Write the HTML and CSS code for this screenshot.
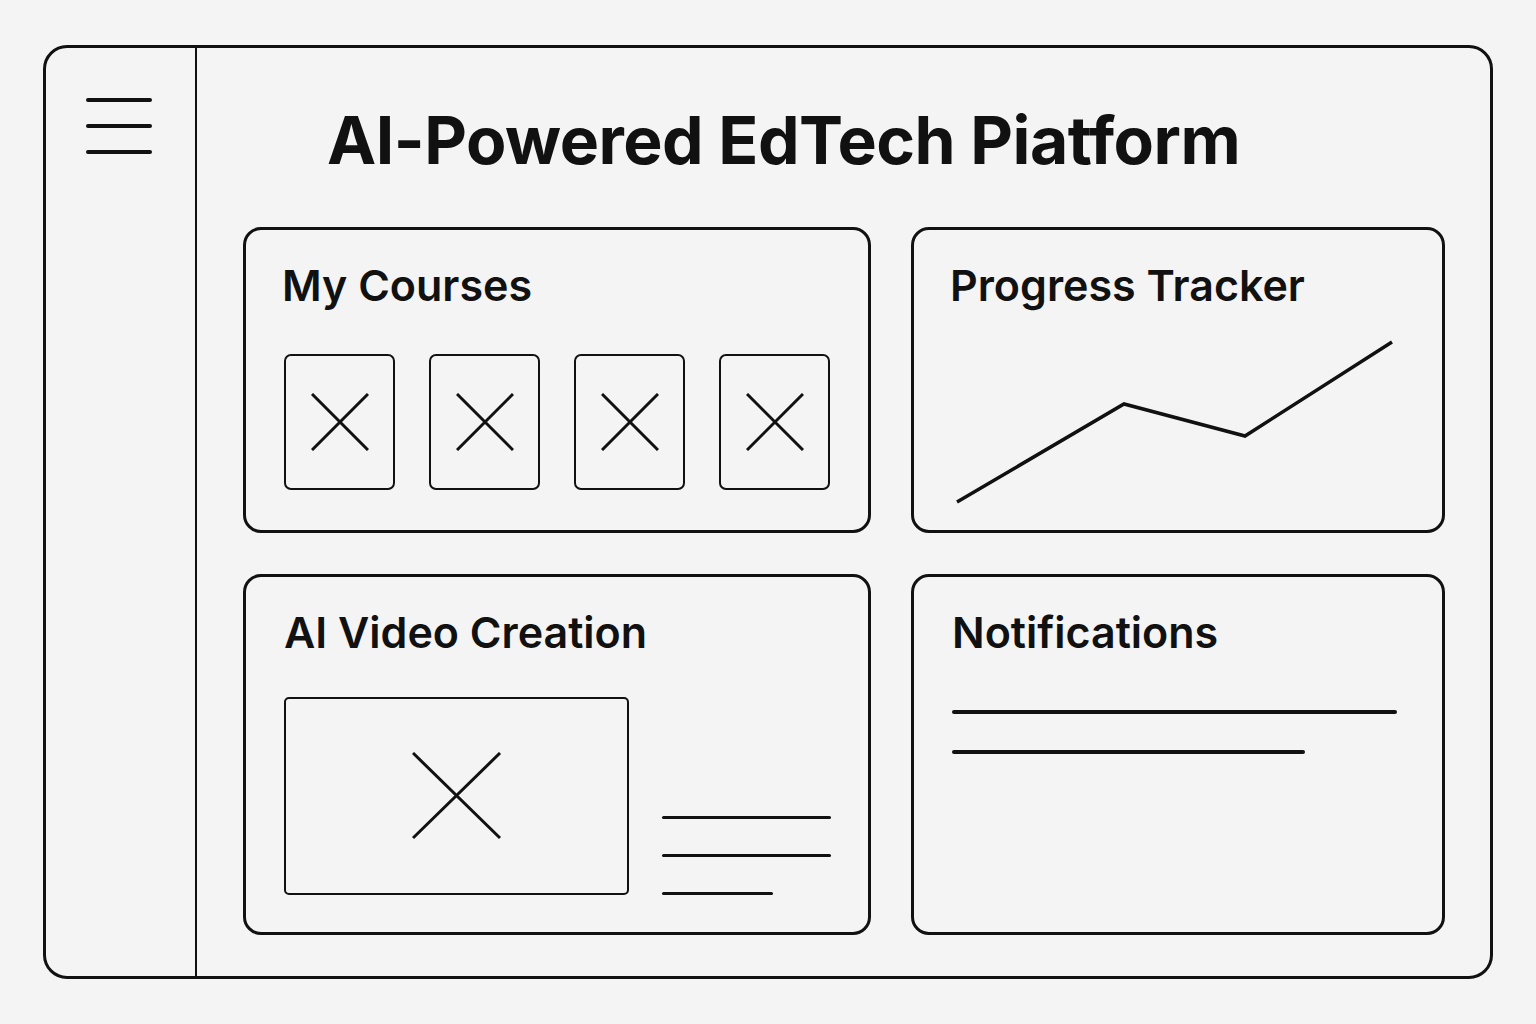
FILE: index.html
```html
<!DOCTYPE html>
<html lang="en">
<head>
    <meta charset="UTF-8">
    <meta name="viewport" content="width=device-width, initial-scale=1.0">
    <title>AI-Powered EdTech Piatform</title>
    <link rel="stylesheet" href="styles.css">
</head>
<body>
    <div class="frame">
        <aside class="sidebar">
            <div class="menu">
                <span></span>
                <span></span>
                <span></span>
            </div>
        </aside>
        <main class="content">
            <h1 class="title">AI-Powered EdTech Piatform</h1>

            <div class="cards">
                <section class="card courses">
                    <h2>My Courses</h2>
                    <div class="thumbs">
                        <div class="thumb"><svg viewBox="0 0 58 58"><path d="M1 1L57 57M57 1L1 57"/></svg></div>
                        <div class="thumb"><svg viewBox="0 0 58 58"><path d="M1 1L57 57M57 1L1 57"/></svg></div>
                        <div class="thumb"><svg viewBox="0 0 58 58"><path d="M1 1L57 57M57 1L1 57"/></svg></div>
                        <div class="thumb"><svg viewBox="0 0 58 58"><path d="M1 1L57 57M57 1L1 57"/></svg></div>
                    </div>
                </section>

                <section class="card progress">
                    <h2>Progress Tracker</h2>
                    <svg class="chart" viewBox="0 0 450 170">
                        <polyline points="7,165 174,67 295,99 442,5"/>
                    </svg>
                </section>

                <section class="card video">
                    <h2>AI Video Creation</h2>
                    <div class="video-row">
                        <div class="player"><svg viewBox="0 0 90 88"><path d="M1 1L88 86M88 1L1 86"/></svg></div>
                        <div class="lines">
                            <span class="line"></span>
                            <span class="line"></span>
                            <span class="line short"></span>
                        </div>
                    </div>
                </section>

                <section class="card notes">
                    <h2>Notifications</h2>
                    <span class="note"></span>
                    <span class="note short"></span>
                </section>
            </div>
        </main>
    </div>
</body>
</html>
```

FILE: styles.css
```css
*, *::before, *::after
{
    box-sizing: border-box;
    margin: 0;
    padding: 0;
}
body
{
    background-color: #f4f4f4;
    color: #111;
    font-family: Inter, "Noto Sans", sans-serif;
    padding: 45px 0 0 43px;
}
.frame
{
    display: flex;
    width: 1450px;
    height: 934px;
    border: 3px solid #111;
    border-radius: 24px;
}
.sidebar
{
    width: 151px;
    border-right: 2px solid #111;
    padding: 50px 0 0 40px;
}
.menu
{
    display: flex;
    flex-direction: column;
    gap: 22px;
}
.menu span
{
    display: block;
    width: 66px;
    height: 4px;
    border-radius: 2px;
    background-color: #111;
}
.content
{
    flex: 1;
    padding: 52px 0 0 46px;
}
.title
{
    font-size: 66px;
    font-weight: 700;
    line-height: 80px;
    letter-spacing: -0.5px;
    margin-left: 84px;
}
.cards
{
    display: grid;
    grid-template-columns: 628px 534px;
    grid-template-rows: 306px 361px;
    gap: 41px 40px;
    margin-top: 47px;
}
.card
{
    border: 3px solid #111;
    border-radius: 18px;
    padding: 30px 0 0 36px;
}
.card h2
{
    font-size: 43px;
    font-weight: 600;
    line-height: 50px;
    letter-spacing: 0;
}
.thumbs
{
    display: flex;
    gap: 34px;
    margin-top: 44px;
    margin-left: 2px;
}
.thumb
{
    width: 111px;
    height: 136px;
    border: 2.5px solid #111;
    border-radius: 7px;
    display: flex;
    align-items: center;
    justify-content: center;
}
.thumb svg
{
    width: 58px;
    height: 58px;
}
svg path, svg polyline
{
    fill: none;
    stroke: #111;
    stroke-width: 3;
}
.chart
{
    display: block;
    width: 450px;
    height: 170px;
    margin-top: 27px;
}
.chart polyline
{
    stroke-width: 3.5;
}
.video h2
{
    margin-left: 2px;
}
.video-row
{
    display: flex;
    align-items: flex-end;
    gap: 33px;
    margin-top: 40px;
    margin-left: 2px;
}
.player
{
    width: 345px;
    height: 198px;
    border: 2.5px solid #111;
    border-radius: 5px;
    display: flex;
    align-items: center;
    justify-content: center;
}
.player svg
{
    width: 90px;
    height: 88px;
}
.lines
{
    display: flex;
    flex-direction: column;
    gap: 35px;
}
.line
{
    display: block;
    width: 169px;
    height: 3px;
    border-radius: 2px;
    background-color: #111;
}
.line.short
{
    width: 111px;
}
.notes
{
    display: flex;
    flex-direction: column;
    padding-left: 38px;
}
.note
{
    display: block;
    width: 445px;
    height: 4px;
    border-radius: 2px;
    background-color: #111;
    margin-top: 53px;
}
.note + .note
{
    margin-top: 36px;
}
.note.short
{
    width: 353px;
}
```
